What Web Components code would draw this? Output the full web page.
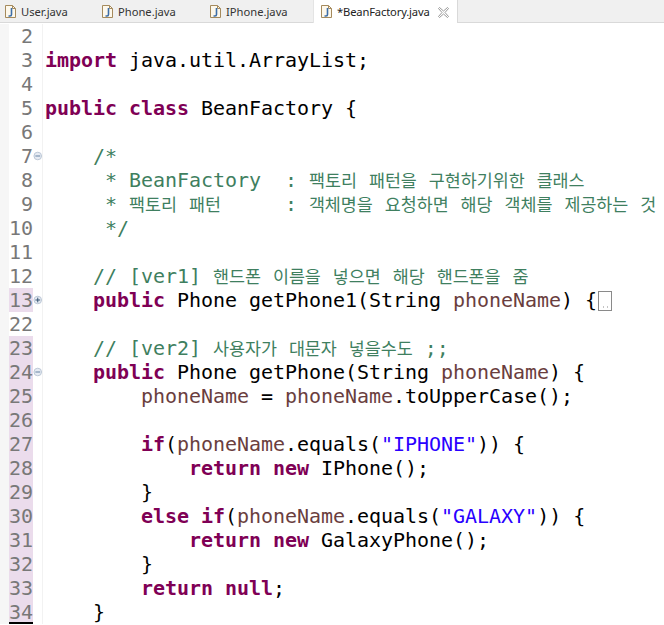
<!DOCTYPE html>
<html>
<head>
<meta charset="utf-8">
<title>BeanFactory.java</title>
<style>
  html, body { margin: 0; padding: 0; background: #fff; overflow: hidden; }
</style>
</head>
<body>
<editor-tabs>
  <editor-tab style="width:97px">User.java</editor-tab>
  <editor-tab style="width:108px">Phone.java</editor-tab>
  <editor-tab style="width:108px">IPhone.java</editor-tab>
  <editor-tab style="width:145px" active>*BeanFactory.java</editor-tab>
</editor-tabs>
<code-view>
  <code-line num="2"></code-line>
  <code-line num="3"><b>import</b> java.util.ArrayList;</code-line>
  <code-line num="4"></code-line>
  <code-line num="5"><b>public</b> <b>class</b> BeanFactory {</code-line>
  <code-line num="6"></code-line>
  <code-line num="7" fold="minus">    <i>/*</i></code-line>
  <code-line num="8">     <i>* BeanFactory  : <u>팩토리</u> <u>패턴을</u> <u>구현하기위한</u> <u>클래스</u></i></code-line>
  <code-line num="9">     <i>* <u>팩토리</u> <u>패턴</u>     <u style="margin-left:4px"></u>: <u>객체명을</u> <u>요청하면</u> <u>해당</u> <u>객체를</u> <u>제공하는</u> <u>것</u></i></code-line>
  <code-line num="10">     <i>*/</i></code-line>
  <code-line num="11"></code-line>
  <code-line num="12">    <i>// [ver1] <u>핸드폰</u> <u>이름을</u> <u>넣으면</u> <u>해당</u> <u>핸드폰을</u> <u>줌</u></i></code-line>
  <code-line num="13" fold="plus" changed>    <b>public</b> Phone getPhone1(String <em>phoneName</em>) {<collapsed-mark></collapsed-mark></code-line>
  <code-line num="22"></code-line>
  <code-line num="23" changed>    <i>// [ver2] <u>사용자가</u> <u>대문자</u> <u>넣을수도</u> ;;</i></code-line>
  <code-line num="24" fold="minus" changed>    <b>public</b> Phone getPhone(String <em>phoneName</em>) {</code-line>
  <code-line num="25" changed>        <em>phoneName</em> = <em>phoneName</em>.toUpperCase();</code-line>
  <code-line num="26" changed></code-line>
  <code-line num="27" changed>        <b>if</b>(<em>phoneName</em>.equals(<s>"IPHONE"</s>)) {</code-line>
  <code-line num="28" changed>            <b>return</b> <b>new</b> IPhone();</code-line>
  <code-line num="29" changed>        }</code-line>
  <code-line num="30" changed>        <b>else</b> <b>if</b>(<em>phoneName</em>.equals(<s>"GALAXY"</s>)) {</code-line>
  <code-line num="31" changed>            <b>return</b> <b>new</b> GalaxyPhone();</code-line>
  <code-line num="32" changed>        }</code-line>
  <code-line num="33" changed>        <b>return</b> <b>null</b>;</code-line>
  <code-line num="34" changed last>    }</code-line>
</code-view>

<script>
const tabsTemplate = document.createElement('template');
tabsTemplate.innerHTML = `
  <style>
    :host {
      display: flex;
      height: 22px;
      background: #f0f0f0;
      border-bottom: 1px solid #d9d9d9;
    }
  </style>
  <slot></slot>
`;

class EditorTabs extends HTMLElement {
  constructor() {
    super();
    this.attachShadow({mode: 'open'});
    this.shadowRoot.appendChild(tabsTemplate.content.cloneNode(true));
  }
}
customElements.define('editor-tabs', EditorTabs);

//
// one tab
//
const tabTemplate = document.createElement('template');
tabTemplate.innerHTML = `
  <style>
    :host {
      display: flex;
      align-items: center;
      box-sizing: border-box;
      height: 23px;
      padding-left: 4px;
      gap: 4px;
      font: 11.2px "Noto Sans", sans-serif;
      color: #333;
    }
    :host([active]) {
      background: #fff;
      color: #222;
      padding-left: 6px;
      letter-spacing: -0.15px;
      border-right: 1px solid #d9d9d9;
      border-left: 1px solid #e4e4e4;
    }
    svg { flex: none; }
    .close { display: none; margin-left: 4px; margin-top: 1px; }
    :host([active]) .close { display: block; }
  </style>
  <svg width="13" height="15" viewBox="0 0 13 15">
    <path d="M1.500 1.500h7l3 3v9h-10z" fill="#fdf8ec" stroke="#a58a5c"/>
    <path d="M8.500 1.500v3h3" fill="none" stroke="#a58a5c"/>
    <path d="M7.500 4v6.500q0 1.500-1.500 1.500h-1.500" fill="none" stroke="#3d6ea8" stroke-width="1.600"/>
  </svg>
  <slot></slot>
  <svg class="close" width="11" height="11" viewBox="0 0 11 11">
    <path d="M.5 1.500l1-1 4 3.500 4-3.500 1 1-3.500 4 3.500 4-1 1-4-3.500-4 3.500-1-1 3.500-4z" fill="#fff" stroke="#8d8d8d" stroke-width=".9"/>
  </svg>
`;

class EditorTab extends HTMLElement {
  constructor() {
    super();
    this.attachShadow({mode: 'open'});
    this.shadowRoot.appendChild(tabTemplate.content.cloneNode(true));
  }
}
customElements.define('editor-tab', EditorTab);

//
// editor body
//
const viewTemplate = document.createElement('template');
viewTemplate.innerHTML = `
  <style>
    :host {
      display: block;
      margin-top: 1px;
      font: 20px/24px "DejaVu Sans Mono", monospace;
      color: #000;
    }
  </style>
  <slot></slot>
`;

class CodeView extends HTMLElement {
  constructor() {
    super();
    this.attachShadow({mode: 'open'});
    this.shadowRoot.appendChild(viewTemplate.content.cloneNode(true));
  }
}
customElements.define('code-view', CodeView);

//
// line: number, fold marker, text
//
const lineTemplate = document.createElement('template');
lineTemplate.innerHTML = `
  <style>
    :host {
      display: flex;
      height: 24px;
    }
    .ruler {
      width: 9px;
      flex: none;
      background: #f6f6f6;
    }
    .num {
      box-sizing: border-box;
      width: 24px;
      height: 24px;
      flex: none;
      text-align: right;
      color: #787878;
    }
    :host([changed]) .num { background: #ebdcec; }
    :host([last]) .num { border-bottom: 2px solid #000; }
    .fold {
      width: 9px;
      flex: none;
      display: flex;
      align-items: center;
      border-right: 1px solid #f2f2f2;
    }
    .code {
      flex: 1;
      min-width: 0;
      height: 24px;
      padding-left: 2px;
      white-space: pre;
      letter-spacing: -0.04px;
    }
  </style>
  <div class="ruler"></div>
  <div class="num"></div>
  <div class="fold"></div>
  <div class="code"><slot></slot></div>
`;

class CodeLine extends HTMLElement {
  constructor() {
    super();
    this.attachShadow({mode: 'open'});
    this.shadowRoot.appendChild(lineTemplate.content.cloneNode(true));
  }

  connectedCallback() {
    this.shadowRoot.querySelector('.num').textContent = this.getAttribute('num');
    let fold = this.getAttribute('fold');
    if (fold) {
      let bar = fold == 'plus'
        ? '<path d="M2.500 5h5M5 2.500v5" stroke="#2f4f6f"/>'
        : '<path d="M2.500 5h5" stroke="#5f7f9f"/>';
      this.shadowRoot.querySelector('.fold').innerHTML =
        '<svg width="10" height="10" viewBox="0 0 10 10" style="margin-left:-.5px"><circle cx="5" cy="5" r="4" fill="#e6ebf3" stroke="#b8c4d4"/>' + bar + '</svg>';
    }
  }
}
customElements.define('code-line', CodeLine);

//
// the little [..] after a collapsed block
//
const markTemplate = document.createElement('template');
markTemplate.innerHTML = `
  <style>
    :host {
      display: inline-block;
      white-space: normal;
      line-height: 0;
      margin-left: 1px;
      vertical-align: -4px;
    }
  </style>
  <svg width="14" height="20" viewBox="0 0 14 20">
    <rect x=".5" y=".5" width="13" height="19" fill="#fff" stroke="#8a8a8a"/>
    <path d="M5 16h1M9 16h1" stroke="#888"/>
  </svg>
`;

class CollapsedMark extends HTMLElement {
  constructor() {
    super();
    this.attachShadow({mode: 'open'});
    this.shadowRoot.appendChild(markTemplate.content.cloneNode(true));
  }
}
customElements.define('collapsed-mark', CollapsedMark);
</script>
<style>
  code-line b { color: #7f0055; font-weight: bold; }
  code-line i { color: #3f7f5f; font-style: normal; }
  code-line em { color: #6a3e3e; font-style: normal; }
  code-line s { color: #2a00ff; text-decoration: none; }
  code-line u { text-decoration: none; font-family: "Noto Sans CJK KR", sans-serif; font-size: 17.4px; line-height: 1; }
</style>
</body>
</html>
